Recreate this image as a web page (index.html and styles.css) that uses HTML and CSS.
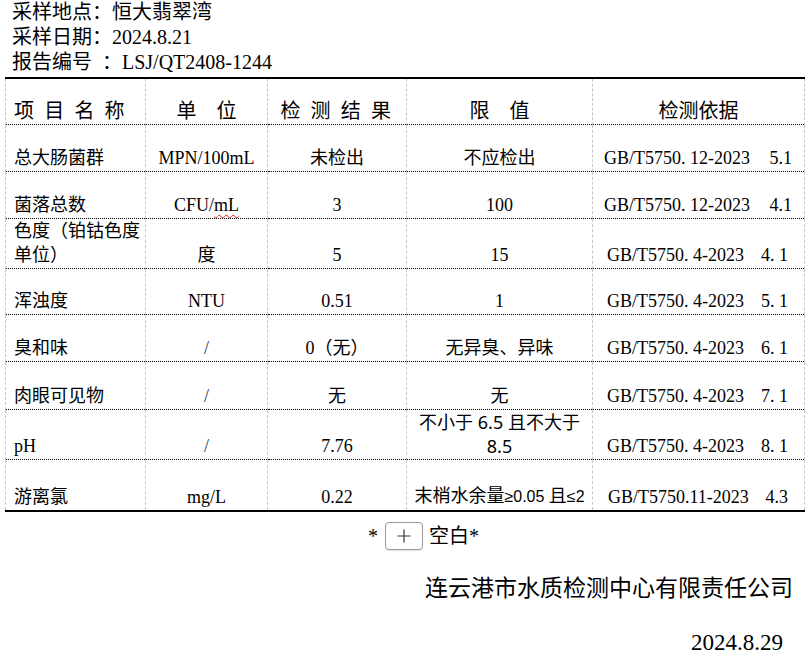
FILE: index.html
```html
<!DOCTYPE html>
<html lang="zh-CN">
<head>
<meta charset="utf-8">
<title>检测报告</title>
<link rel="stylesheet" href="styles.css">
</head>
<body>
<div class="info">
  <div class="info-line">采样地点：恒大翡翠湾</div>
  <div class="info-line">采样日期：2024.8.21</div>
  <div class="info-line">报告编号&nbsp;&nbsp;：LSJ/QT2408-1244</div>
</div>
<table class="report">
  <colgroup>
    <col class="c1"><col class="c2"><col class="c3"><col class="c4"><col class="c5">
  </colgroup>
  <tr class="head">
    <td class="name spaced">项 目 名 称</td>
    <td>单&nbsp;&nbsp;&nbsp;&nbsp;位</td>
    <td class="spaced">检 测 结 果</td>
    <td>限&nbsp;&nbsp;&nbsp;&nbsp;值</td>
    <td>检测依据</td>
  </tr>
  <tr class="r47">
    <td class="name">总大肠菌群</td>
    <td>MPN/100mL</td>
    <td>未检出</td>
    <td>不应检出</td>
    <td><div class="basis"><span>GB/T5750. 12-2023</span><span>5.1</span></div></td>
  </tr>
  <tr class="r47">
    <td class="name">菌落总数</td>
    <td>CFU/<span class="typo">mL</span></td>
    <td>3</td>
    <td>100</td>
    <td><div class="basis"><span>GB/T5750. 12-2023</span><span>4.1</span></div></td>
  </tr>
  <tr class="r49">
    <td class="name">色度（铂钴色度<br>单位）</td>
    <td>度</td>
    <td>5</td>
    <td>15</td>
    <td><div class="basis wide"><span>GB/T5750. 4-2023</span><span>4. 1</span></div></td>
  </tr>
  <tr class="r46">
    <td class="name">浑浊度</td>
    <td>NTU</td>
    <td>0.51</td>
    <td>1</td>
    <td><div class="basis wide"><span>GB/T5750. 4-2023</span><span>5. 1</span></div></td>
  </tr>
  <tr class="r47">
    <td class="name">臭和味</td>
    <td class="slash">/</td>
    <td>0（无）</td>
    <td>无异臭、异味</td>
    <td><div class="basis wide"><span>GB/T5750. 4-2023</span><span>6. 1</span></div></td>
  </tr>
  <tr class="r48">
    <td class="name">肉眼可见物</td>
    <td class="slash">/</td>
    <td>无</td>
    <td>无</td>
    <td><div class="basis wide"><span>GB/T5750. 4-2023</span><span>7. 1</span></div></td>
  </tr>
  <tr class="r47">
    <td class="name">pH</td>
    <td class="slash">/</td>
    <td>7.76</td>
    <td class="sans">不小于 6.5 且不大于<br>8.5</td>
    <td><div class="basis wide"><span>GB/T5750. 4-2023</span><span>8. 1</span></div></td>
  </tr>
  <tr class="r52">
    <td class="name">游离氯</td>
    <td>mg/L</td>
    <td>0.22</td>
    <td class="sans">末梢水余量<span class="tight">≥0.05 </span>且<span class="tight">≤2</span></td>
    <td><div class="basis last"><span>GB/T5750.11-2023</span><span>4.3</span></div></td>
  </tr>
</table>
<div class="blank">
  <span class="star">*</span>
  <span class="add-btn"><svg width="16" height="16" viewBox="0 0 16 16"><path d="M8 1.5V14.5M1.5 8H14.5" stroke="#333" stroke-width="1.2" fill="none"/></svg></span>
  <span class="blank-text">空白*</span>
</div>
<div class="company">连云港市水质检测中心有限责任公司</div>
<div class="date">2024.8.29</div>
</body>
</html>
```

FILE: styles.css
```css
html, body {
  margin: 0;
  padding: 0;
  overflow: hidden;
  background: #fff;
}

body {
  font-family: "Liberation Serif", "Noto Sans CJK SC", serif;
  color: #000;
}

.info {
  padding-left: 12px;
  font-size: 20px;
  line-height: 25px;
}

.report {
  border-collapse: collapse;
  table-layout: fixed;
  width: 800px;
  margin: 2px 0 0 5px;
  font-size: 18px;
  line-height: 24px;
}

.c1 { width: 140px; }
.c2 { width: 122px; }
.c3 { width: 139px; }
.c4 { width: 186px; }
.c5 { width: 212px; }

.report td {
  border-left: 1px dashed #c6c6c6;
  border-right: 1px dashed #c6c6c6;
  border-bottom: 1px dotted #000;
  padding: 0 0 1px;
  text-align: center;
  vertical-align: bottom;
  white-space: nowrap;
}

.report tr:first-child td {
  border-top: 2px solid #000;
}

.report tr:last-child td {
  border-bottom: 2px solid #000;
}

.head { height: 46px; }
.head td { font-size: 20px; padding-bottom: 1px; }
.r46 { height: 46px; }
.r47 { height: 47px; }
.r48 { height: 48px; }
.r49 { height: 49px; }
.r52 { height: 52px; }

.report td.name {
  text-align: left;
  padding-left: 8px;
}

.spaced { letter-spacing: 2.6px; }

.slash { color: #333; }

.typo {
  text-decoration: underline wavy #e02020;
  text-decoration-thickness: 1px;
  text-underline-offset: 3px;
}

.sans {
  font-family: "Noto Sans", "Noto Sans CJK SC", sans-serif;
}

.tight {
  font-family: "Liberation Sans", "DejaVu Sans", sans-serif;
  font-size: 16px;
}

.basis {
  display: flex;
  justify-content: space-between;
  padding: 0 12px 0 11px;
}

.basis.wide { padding-right: 16px; padding-left: 14px; }
.basis.last { padding-right: 16px; padding-left: 15px; }

.blank {
  display: flex;
  align-items: center;
  justify-content: center;
  height: 30px;
  margin-top: 9px;
  padding-left: 36px;
  font-size: 20px;
  line-height: 30px;
}

.star { width: 10px; }

.add-btn {
  display: inline-flex;
  align-items: center;
  justify-content: center;
  box-sizing: border-box;
  width: 38px;
  height: 28px;
  margin: 0 6px 0 7px;
  border: 1px solid #9a9a9a;
  border-radius: 4px;
  background: #fff;
  box-shadow: 0 1px 1px rgba(0,0,0,0.12);
}

.company {
  margin-top: 23px;
  padding-right: 18px;
  text-align: right;
  font-size: 23px;
  line-height: 30px;
}

.date {
  margin-top: 27px;
  padding-right: 28px;
  text-align: right;
  font-size: 23px;
  line-height: 24px;
}
```
